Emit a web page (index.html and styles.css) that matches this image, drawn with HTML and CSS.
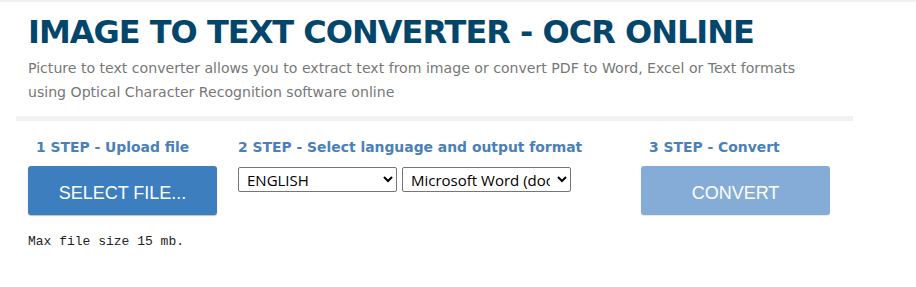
FILE: index.html
```html
<!DOCTYPE html>
<html lang="en">

<head>
  <meta charset="UTF-8" />
  <title>Image to Text Converter - OCR Online</title>
  <link rel="stylesheet" href="styles.css">
</head>

<body>

  <div class="page">

    <!-- Header -->
    <div class="intro">
      <h1>IMAGE TO TEXT CONVERTER - OCR ONLINE</h1>
      <p>Picture to text converter allows you to extract text from image or convert PDF to Word, Excel or Text formats
        using Optical Character Recognition software online</p>
    </div>

    <div class="divider"></div>

    <!-- Steps -->
    <div class="steps">
      <div class="step step-upload">
        <h3>1 STEP - Upload file</h3>
        <button class="btn btn-select">SELECT FILE...</button>
        <p class="max-size">Max file size 15 mb.</p>
      </div>

      <div class="step step-options">
        <h3>2 STEP - Select language and output format</h3>
        <div class="selects">
          <select class="lang">
            <option>ENGLISH</option>
          </select>
          <select class="format">
            <option>Microsoft Word (docx)</option>
          </select>
        </div>
      </div>

      <div class="step step-convert">
        <h3>3 STEP - Convert</h3>
        <button class="btn btn-convert" disabled>CONVERT</button>
      </div>
    </div>

  </div>

</body>

</html>
```

FILE: styles.css
```css
body {
  margin: 0;
  border-top: 2px solid #f2f2f2;
  font-family: "DejaVu Sans", Verdana, sans-serif;
  background: #fff;
}

.page {
  width: 837px;
  margin-left: 16px;
}

.intro {
  padding: 0 12px;
}

h1 {
  margin: 10px 0 0;
  font-size: 32px;
  letter-spacing: -1px;
  line-height: 40px;
  color: #03466b;
  font-weight: bold;
}

.intro p {
  max-width: 790px;
  margin: 4px 0 0;
  font-size: 14.1px;
  line-height: 24px;
  color: #777;
}

.divider {
  height: 5px;
  background: #f2f2f2;
  margin-top: 12px;
}

.steps {
  display: flex;
  padding-left: 12px;
}

.step h3 {
  margin: 16px 0 9px;
  font-size: 13.9px;
  line-height: 20px;
  color: #4a80b9;
}

.step-upload {
  width: 210px;
}

.step-upload h3,
.step-convert h3 {
  padding-left: 8px;
}

.step-options {
  width: 403px;
}

.btn {
  display: block;
  width: 189px;
  height: 49px;
  border: none;
  border-radius: 3px;
  color: #fff;
  font-family: "Liberation Sans", Arial, sans-serif;
  font-size: 18px;
  padding: 5px 0 0;
}

.btn-select {
  background: #3d7ebf;
  box-shadow: 0 1px 1px rgba(0, 0, 0, 0.25);
}

.btn-convert {
  background: #84acd7;
  box-shadow: 0 1px 1px rgba(0, 0, 0, 0.1);
}

.max-size {
  margin: 19px 0 0;
  font-family: "Liberation Mono", "Courier New", monospace;
  font-size: 13px;
  color: #222;
}

.selects {
  display: flex;
  gap: 5px;
  padding-top: 1px;
}

.selects select {
  height: 25px;
  border: 1px solid #767676;
  border-radius: 2px;
  font-family: "Open Sans", sans-serif;
  font-size: 15px;
  background: #fff;
  color: #000;
  padding: 0 4px;
}

.lang {
  width: 159px;
}

.format {
  width: 169px;
}
```
